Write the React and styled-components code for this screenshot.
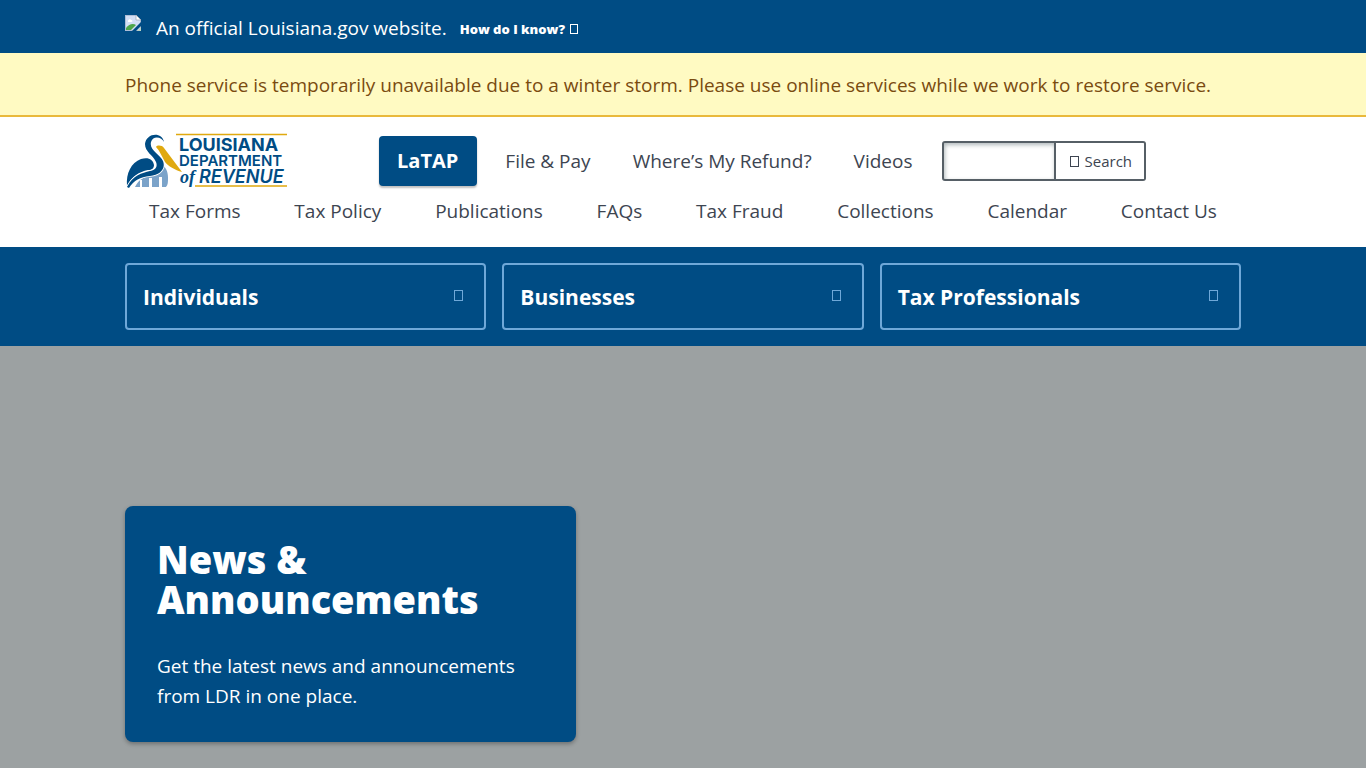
import React from "react";
import styled, { createGlobalStyle } from "styled-components";

const PALETTE = {
  blue: "#004c84",
  lightBlue: "#6fa8d8",
  gold: "#e0a90f",
  text: "#3d4551",
  border: "#565f66",
};

const GlobalStyle = createGlobalStyle`
  * {
    box-sizing: border-box;
  }

  body {
    margin: 0;
    font-family: "Open Sans", "Noto Sans", sans-serif;
    font-size: 19px;
    line-height: 30px;
    color: ${PALETTE.text};
    background: #9ca1a2;
  }

  a {
    color: inherit;
    text-decoration: none;
  }

  button,
  input {
    font: inherit;
    color: inherit;
  }
`;

const Container = styled.div`
  width: 100%;
  max-width: 1180px;
  margin: 0 auto;
  padding: 0 32px;
`;

const OfficialBar = styled.div`
  background: ${PALETTE.blue};
  color: #fff;
`;

const OfficialRow = styled(Container)`
  display: flex;
  align-items: center;
  height: 53px;
  padding-top: 2px;
`;

const BrokenImage = styled.svg`
  margin: 0 15px 10px 0;
`;

const KnowButton = styled.button`
  display: flex;
  align-items: center;
  gap: 5px;
  margin-left: 13px;
  padding: 3px 0 0;
  border: 0;
  background: none;
  font-size: 13px;
  font-weight: 800;
  line-height: 20px;
  cursor: pointer;
`;

const Glyph = styled.span`
  width: ${({ $tall }) => ($tall ? 9 : 8)}px;
  height: ${({ $tall }) => ($tall ? 11 : 10)}px;
  border: 1px solid currentColor;
`;

const Alert = styled.div`
  padding: 17px 0 15px;
  border-bottom: 2px solid #e9b93c;
  background: #fffac2;
  color: #7a4b10;
`;

const Header = styled.header`
  padding: 15px 0 21px;
  background: #fff;
`;

const MainRow = styled(Container)`
  display: flex;
  align-items: center;
`;

const Logo = styled.a`
  display: flex;
  margin-right: 90px;
`;

const MainNav = styled.nav`
  display: flex;
  align-items: center;
`;

const LatapLink = styled.a`
  margin-right: 7px;
  padding: 10px 19px 10px 18px;
  border-radius: 4px;
  background: ${PALETTE.blue};
  color: #fff;
  font-size: 20px;
  font-weight: 700;
  box-shadow: 0 2px 2px rgba(0, 0, 0, 0.25);
`;

const NavLink = styled.a`
  padding: 0 21px;
  white-space: nowrap;
`;

const SearchForm = styled.form`
  display: flex;
  margin-left: 8px;
  height: 40px;
`;

const SearchInput = styled.input`
  width: 114px;
  padding: 0 8px;
  border: 2px solid ${PALETTE.border};
  border-radius: 3px 0 0 3px;
  background: #fff;
  box-shadow: inset 1px 2px 4px rgba(60, 80, 85, 0.4);
`;

const SearchButton = styled.button`
  display: flex;
  align-items: center;
  gap: 6px;
  padding: 0 12px 0 14px;
  border: 2px solid ${PALETTE.border};
  border-left: 0;
  border-radius: 0 3px 3px 0;
  background: #fff;
  font-size: 15px;
  cursor: pointer;
`;

const SubNav = styled.nav`
  display: flex;
  justify-content: space-between;
  padding: 6px 24px 0;
`;

const AudienceBar = styled.div`
  padding: 16px 0;
  background: ${PALETTE.blue};
`;

const AudienceGrid = styled(Container)`
  display: grid;
  grid-template-columns: repeat(3, 1fr);
  gap: 16px;
`;

const AudienceButton = styled.button`
  display: flex;
  align-items: center;
  justify-content: space-between;
  height: 67px;
  padding: 0 21px 0 16px;
  border: 2px solid ${PALETTE.lightBlue};
  border-radius: 4px;
  background: none;
  color: #fff;
  font-size: 21px;
  font-weight: 700;
  text-align: left;
  cursor: pointer;

  ${Glyph} {
    margin-bottom: 3px;
    color: ${PALETTE.lightBlue};
  }
`;

const Hero = styled.main`
  padding: 160px 0 26px;
`;

const NewsCard = styled.section`
  max-width: 451px;
  padding: 33px 32px 31px;
  border-radius: 8px;
  background: ${PALETTE.blue};
  color: #fff;
  box-shadow: 0 2px 4px rgba(0, 0, 0, 0.3);
`;

const NewsTitle = styled.h1`
  margin: 0;
  font-size: 38px;
  font-weight: 800;
  line-height: 40px;
`;

const NewsText = styled.p`
  margin: 32px 0 0;
`;

const AUDIENCES = ["Individuals", "Businesses", "Tax Professionals"];

const MAIN_LINKS = ["File & Pay", "Where’s My Refund?", "Videos"];

const SUB_LINKS = [
  "Tax Forms",
  "Tax Policy",
  "Publications",
  "FAQs",
  "Tax Fraud",
  "Collections",
  "Calendar",
  "Contact Us",
];

const SealImage = () => (
  <BrokenImage width="16" height="16" viewBox="0 0 16 16" aria-hidden="true">
    <path d="M0 0h11l5 5v11H0z" fill="#aebdd6" />
    <path d="M1 1h10v4h4v10H1z" fill="#d3dff5" />
    <path d="M11 0l5 5h-5z" fill="#fff" stroke="#9ba7b5" strokeWidth="0.7" />
    <path d="M3 6c0-2 3-2 3-1 2 0 2 2 0 2H3z" fill="#fff" />
    <path d="M1 15v-2c3-4 7-5 10-3l-5 5z" fill="#4ea64a" />
    <path d="M16 7l-9 9h4l5-5z" fill={PALETTE.blue} />
    <path d="M16 12v4h-4z" fill="#b9d2c2" />
  </BrokenImage>
);

const LogoImage = () => (
  <svg width="164" height="58" viewBox="0 0 164 58" aria-hidden="true">
    <path d="M51 2.500h111M70 54h92" stroke={PALETTE.gold} strokeWidth="1.400" />
    <path
      d="M37 33c4 2 6 7 6 13 0 4 0 7-2 9h-4V45h-3v10h-7V46h-3v9h-7v-7h-2v7h-5c4-8 9-10 15-11 6 0 12-4 12-11z"
      fill="#7ba3c9"
    />
    <path
      d="M2 54C1 41 6 31 16 27c7-2 12 0 13 6 0 3-2 5-6 5-9 2-16 6-21 16z"
      fill={PALETTE.blue}
    />
    <path
      d="M39 10C37 5 28 3 26 10c-2 8 9 12 12 19 3 8-3 14-13 15C15 45 9 48 4 56l-2-1c6-12 15-14 23-16 5-1 8-4 6-9C28 23 20 20 20 12 21 1 37-1 39 10z"
      fill={PALETTE.blue}
      stroke="#fff"
      strokeWidth="1.600"
      paintOrder="stroke"
    />
    <path d="M31 15c1-2 6-2 8 1l18 24c-7-2-14-6-17-10-3-5-5-11-9-15z" fill={PALETTE.gold} />
    <g fill={PALETTE.blue} fontFamily="Inter, sans-serif" fontWeight="600">
      <text x="54" y="19" fontSize="18" fontWeight="700">LOUISIANA</text>
      <text x="54" y="34" fontSize="15">DEPARTMENT</text>
      <text x="55" y="51" fontSize="18" fontFamily="Liberation Serif, serif" fontStyle="italic">
        of
      </text>
      <text x="74" y="51" fontSize="18" fontStyle="italic">REVENUE</text>
    </g>
  </svg>
);

const App = () => (
  <>
    <GlobalStyle />
    <OfficialBar>
      <OfficialRow>
        <SealImage />
        <span>An official Louisiana.gov website.</span>
        <KnowButton type="button">
          How do I know? <Glyph />
        </KnowButton>
      </OfficialRow>
    </OfficialBar>
    <Alert role="status">
      <Container>
        Phone service is temporarily unavailable due to a winter storm. Please use online services
        while we work to restore service.
      </Container>
    </Alert>
    <Header>
      <MainRow>
        <Logo href="#" aria-label="Louisiana Department of Revenue">
          <LogoImage />
        </Logo>
        <MainNav>
          <LatapLink href="#">LaTAP</LatapLink>
          {MAIN_LINKS.map((label) => (
            <NavLink key={label} href="#">
              {label}
            </NavLink>
          ))}
        </MainNav>
        <SearchForm role="search">
          <SearchInput type="text" aria-label="Search" />
          <SearchButton type="button">
            <Glyph $tall /> Search
          </SearchButton>
        </SearchForm>
      </MainRow>
      <Container>
        <SubNav>
          {SUB_LINKS.map((label) => (
            <a key={label} href="#">
              {label}
            </a>
          ))}
        </SubNav>
      </Container>
    </Header>
    <AudienceBar>
      <AudienceGrid>
        {AUDIENCES.map((label) => (
          <AudienceButton key={label} type="button">
            {label}
            <Glyph $tall />
          </AudienceButton>
        ))}
      </AudienceGrid>
    </AudienceBar>
    <Hero>
      <Container>
        <NewsCard>
          <NewsTitle>News &amp; Announcements</NewsTitle>
          <NewsText>Get the latest news and announcements from LDR in one place.</NewsText>
        </NewsCard>
      </Container>
    </Hero>
  </>
);

export default App;
